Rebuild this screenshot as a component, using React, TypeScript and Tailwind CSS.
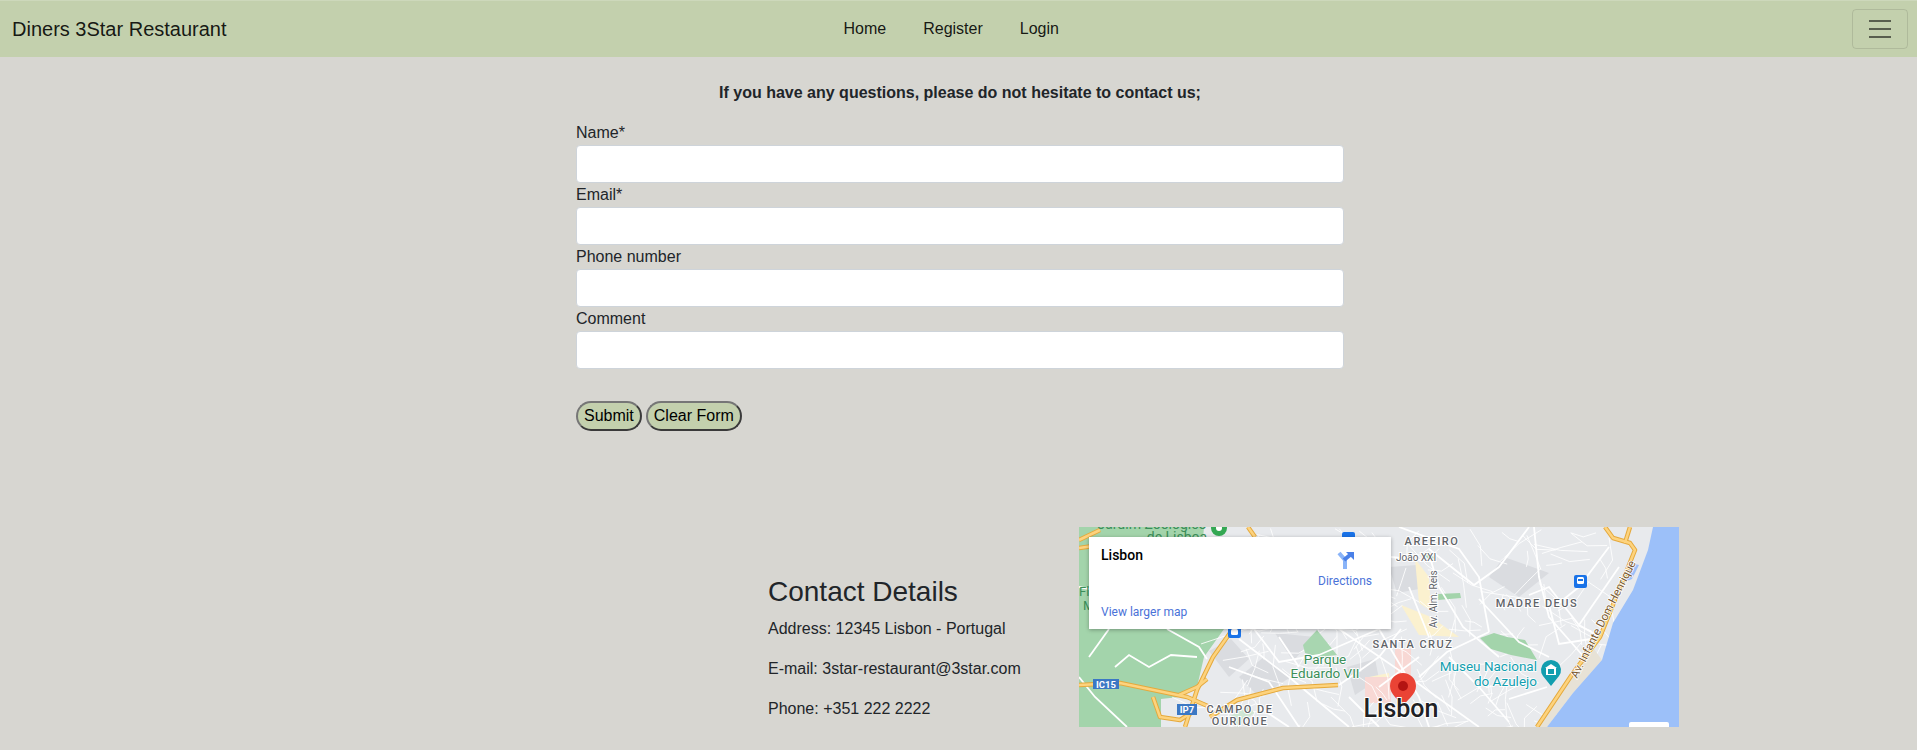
const roads = [
  "M0 158 L41 156 L108 170 L131 180",
  "M151 106 L134 130 L118 163 L106 200",
  "M131 190 L158 173 L204 161 L259 158",
  "M74 170 L81 190 L101 193 L112 186",
  "M0 13 L21 3",
  "M0 21 L14 19",
  "M169 0 L176 10",
  "M458 200 L494 146 L521 110 L548 43 L556 23 L551 16 L534 11 L526 0",
  "M551 0 L546 16",
  "M100 168 L118 160 L128 152",
];

const whiteRoads = [
  "M0 60 L10 62", "M10 130 L30 102", "M0 150 L16 170 L48 200", "M36 140 L50 128 L70 140 L92 128 L118 130",
  "M88 102 L120 120 L128 132", "M160 112 L210 150 L270 200", "M175 102 L200 135 L240 128 L300 102",
  "M260 158 L300 130 L322 102", "M150 140 L190 155 L220 200", "M300 102 L340 170 L350 200",
  "M260 102 L286 120 L330 150 L400 200", "M320 0 L380 22 L400 50 L410 105", "M350 22 L395 58 L420 40 L450 0",
  "M455 0 L460 50 L470 90 L505 130", "M450 68 L470 60 L500 98 L521 110", "M400 72 L440 115 L470 130",
  "M410 105 L368 125 L340 150", "M312 30 L352 34 L360 60 L384 100 L420 130", "M470 78 L480 117 L512 112",
  "M500 98 L540 40", "M200 110 L220 140", "M370 130 L400 160 L430 195", "M430 172 L468 160", "M330 60 L350 110",
  "M530 20 L500 60 L480 76", "M180 180 L210 200", "M270 170 L300 200", "M300 160 L340 130",
];

const grayBlocks = [
  "M130 124 L152 112 L170 132 L150 150 Z", "M185 130 L212 150 L180 170 L160 150 Z", "M196 106 L236 110 L214 134 Z",
  "M310 40 L338 38 L340 62 L318 66 Z", "M425 30 L470 46 L440 70 L410 50 Z", "M268 140 L296 132 L300 152 L276 168 Z",
];

const cream = [
  "M336 32 L350 50 L352 84 L340 76 Z", "M322 78 L352 90 L380 110 L340 108 Z", "M290 150 L310 146 L312 170 L292 170 Z",
];

const pink = ["M316 122 L332 122 L332 150 L316 150 Z", "M286 150 L312 150 L312 176 L286 176 Z"];

// fine street net for the built-up part of the map
function streetNet() {
  const out: string[] = [];
  let seed = 17;
  const next = () => {
    seed = (seed * 1103 + 12345) % 65536;
    return seed / 65536;
  };
  for (let i = 0; i < 210; i++) {
    const x = 135 + next() * 395;
    const y = next() * 200;
    if (x > 470 && y > 120) continue;
    const a = next() * Math.PI;
    const l = 8 + next() * 20;
    const bx = x + Math.cos(a) * l;
    const by = y + Math.sin(a) * l;
    const a2 = a + (next() - 0.5) * 1.6;
    out.push(`M${x.toFixed(1)} ${y.toFixed(1)} L${bx.toFixed(1)} ${by.toFixed(1)} L${(bx + Math.cos(a2) * l).toFixed(1)} ${(by + Math.sin(a2) * l).toFixed(1)}`);
  }
  return out;
}

const streets = streetNet();

function MapDrawing() {
  return (
    <svg viewBox="0 0 600 200" className="block w-[600px] h-[200px]" style={{ fontFamily: "Roboto, sans-serif" }}>
      <rect width="600" height="200" fill="#e8eaed" />
      {/* parks */}
      <path d="M0 0 L125 0 L120 60 L145 102 L125 130 L118 160 L100 170 L82 172 L82 200 L0 200 Z" fill="#a3d4ab" />
      {grayBlocks.map((d) => (
        <path key={d} d={d} fill="#dadce0" />
      ))}
      {cream.map((d) => (
        <path key={d} d={d} fill="#fbf1cf" />
      ))}
      {pink.map((d) => (
        <path key={d} d={d} fill="#f8d8d4" />
      ))}
      {streets.map((d) => (
        <path key={d} d={d} fill="none" stroke="#ffffff" strokeWidth="1" opacity="0.85" />
      ))}
      <path d="M224 118 L238 103 L258 128 L240 130 L226 126 Z" fill="#a8d6b0" />
      <path d="M401 111 L415 106 L428 110 L446 113 L458 133 L432 128 L412 122 Z" fill="#a3d4ab" />
      <path d="M359 67 L381 66 L382 71 L359 73 Z" fill="#a3d4ab" />
      <path d="M344 27 L356 30 L352 34 Z" fill="#a3d4ab" />
      <path d="M150 190 L170 178 L175 186 L158 200 Z" fill="#cfe6d3" />
      {whiteRoads.map((d) => (
        <path key={d} d={d} fill="none" stroke="#ffffff" strokeWidth="1.8" />
      ))}
      {/* river and shore */}
      <path d="M523 133 L494 166 L468 200 L458 200 L494 146 L512 118 Z" fill="#e7e2d6" />
      <path d="M574 0 L569 23 L554 63 L534 96 L523 133 L494 166 L468 200 L600 200 L600 0 Z" fill="#9cc0f9" />
      <path d="M552 36 L560 38 L553 52 L546 55 Z" fill="#9cc0f9" />
      {/* motorways */}
      {roads.map((d) => (
        <path key={d} d={d} fill="none" stroke="#e5a93c" strokeWidth="4.5" strokeLinejoin="round" />
      ))}
      {roads.map((d) => (
        <path key={d + "i"} d={d} fill="none" stroke="#fdd37e" strokeWidth="2.5" strokeLinejoin="round" />
      ))}
      <circle cx="140" cy="1" r="8" fill="#34a853" />
      <circle cx="140" cy="1" r="3" fill="#ffffff" />
      <text x="73" y="2" textAnchor="middle" fontSize="14" fill="#3b8e59">Jardim Zoológico</text>
      <text x="98" y="15" textAnchor="middle" fontSize="14" fill="#3b8e59">de Lisboa</text>
      <rect x="263" y="5" width="13" height="13" rx="2" fill="#1a73e8" />
      <text x="0" y="69" fontSize="13" fill="#3b8e59">Fl</text>
      <text x="4" y="83" fontSize="13" fill="#3b8e59">M</text>

      <rect x="149" y="98" width="13" height="13" rx="2" fill="#1a73e8" />
      <rect x="152" y="102" width="7" height="6" rx="1.5" fill="#ffffff" />
      <rect x="495" y="48" width="13" height="13" rx="2" fill="#1a73e8" />
      <rect x="498" y="50" width="7" height="7" rx="1.5" fill="#ffffff" />
      <rect x="499" y="52" width="5" height="2" fill="#1a73e8" />

      <rect x="14" y="152" width="26" height="10" fill="#3b78c4" />
      <text x="27" y="160.5" textAnchor="middle" fontSize="9.5" fontWeight="700" fill="#ffffff">IC15</text>
      <rect x="98" y="177" width="20" height="11" fill="#3b78c4" />
      <text x="108" y="186" textAnchor="middle" fontSize="9.5" fontWeight="700" fill="#ffffff">IP7</text>

      <g fontSize="11" fontWeight="500" fill="#5f6368" letterSpacing="1.5" textAnchor="middle" stroke="#ffffff" strokeWidth="2" paintOrder="stroke">
        <text x="353" y="18">AREEIRO</text>
        <text x="458" y="80">MADRE DEUS</text>
        <text x="334" y="121">SANTA CRUZ</text>
        <text x="161" y="186">CAMPO DE</text>
        <text x="161" y="198">OURIQUE</text>
      </g>
      <g fontSize="10" fill="#5f6368" stroke="#ffffff" strokeWidth="2" paintOrder="stroke">
        <text x="317" y="34">João XXI</text>
        <text transform="translate(358 101) rotate(-90)">Av. Alm. Reis</text>
      </g>
      <text transform="translate(498 152) rotate(-63)" fontSize="11.5" fill="#7a5a32" stroke="#ffffff" strokeWidth="1.5" paintOrder="stroke">Av. Infante Dom Henrique</text>

      <g fontSize="13.5" fill="#3b8e59" textAnchor="middle" stroke="#ffffff" strokeWidth="1.5" paintOrder="stroke">
        <text x="246" y="137">Parque</text>
        <text x="246" y="151">Eduardo VII</text>
      </g>
      <g fontSize="13.5" fill="#129eaf" textAnchor="end" stroke="#ffffff" strokeWidth="1.5" paintOrder="stroke">
        <text x="458" y="144">Museu Nacional</text>
        <text x="458" y="159">do Azulejo</text>
      </g>
      <path d="M472 159 L464 149 A10 10 0 1 1 480 149 Z" fill="#129eaf" />
      <path d="M467 148 H477 V141 H467 Z M466 141 L472 137 L478 141 Z" fill="#ffffff" />
      <path d="M469 147 V142 H475 V147 Z" fill="#129eaf" />

      <path d="M324 180 C320 172 311 168 311 159 A13 13 0 1 1 337 159 C337 168 328 172 324 180 Z" fill="#ea4335" />
      <circle cx="324" cy="159" r="5" fill="#b31412" />
      <text x="322" y="190" textAnchor="middle" fontSize="25" fontWeight="500" fill="#202124" stroke="#ffffff" strokeWidth="2" paintOrder="stroke">
        Lisbon
      </text>
      <rect x="550" y="195" width="40" height="8" rx="2" fill="#ffffff" />
    </svg>
  );
}

function Field({ label }: { label: string }) {
  return (
    <label className="block">
      <span className="block h-6 leading-6 text-[#212529]">{label}</span>
      <input
        type="text"
        className="block w-full h-[38px] bg-white border border-[#ced4da] rounded-[4px]"
      />
    </label>
  );
}

function PillButton({ children }: { children: React.ReactNode }) {
  return (
    <button
      type="button"
      className="h-[30px] px-[6px] bg-[#c3d0ad] text-black rounded-[15px] border-2 border-t-[#767676] border-l-[#767676] border-r-[#3a3a3a] border-b-[#3a3a3a]"
    >
      {children}
    </button>
  );
}

export default function App() {
  return (
    <div className="min-h-screen bg-[#d7d6d1] text-[#212529] text-base" style={{ fontFamily: '"Liberation Sans", Arial, sans-serif' }}>
      <nav className="h-[57px] bg-[#c3d0ad] border-t border-[#cdd8bb] flex items-center pl-3 pr-[9px]">
        <a className="w-[813px] text-[20px] text-black/90">Diners 3Star Restaurant</a>
        <div className="flex">
          <a className="px-[18.5px] text-black/90">Home</a>
          <a className="px-[18.5px] text-black/90">Register</a>
          <a className="px-[18.5px] text-black/90">Login</a>
        </div>
        <button type="button" className="ml-auto w-[56px] h-[40px] flex items-center justify-center rounded-[4px] border border-black/10">
          <svg width="30" height="30" viewBox="0 0 30 30" fill="none">
            <path d="M4 7h22M4 15h22M4 23h22" stroke="rgba(0,0,0,.55)" strokeWidth="2" strokeMiterlimit="10" />
          </svg>
        </button>
      </nav>

      <main className="w-[768px] ml-[576px] mt-[24px]">
        <p className="font-bold text-center h-6 leading-6">If you have any questions, please do not hesitate to contact us;</p>
        <form className="mt-[16px]">
          <Field label="Name*" />
          <Field label="Email*" />
          <Field label="Phone number" />
          <Field label="Comment" />
          <div className="flex gap-[4px] mt-[32px]">
            <PillButton>Submit</PillButton>
            <PillButton>Clear Form</PillButton>
          </div>
        </form>
      </main>

      <section className="flex ml-[768px] mt-[96px]">
        <div className="w-[311px] pt-[48px]">
          <h3 className="text-[28px] leading-[33.6px] mb-2">Contact Details</h3>
          <p className="mb-4 leading-6">Address: 12345 Lisbon - Portugal</p>
          <p className="mb-4 leading-6">E-mail: 3star-restaurant@3star.com</p>
          <p className="leading-6">Phone: +351 222 2222</p>
        </div>
        <div className="relative w-[600px] h-[200px] overflow-hidden">
          <MapDrawing />
          <div className="absolute left-[10px] top-[10px] w-[302px] h-[92px] bg-white shadow-[0_1px_4px_rgba(0,0,0,0.3)] flex justify-between px-3 pt-[9px] pb-[9px]" style={{ fontFamily: "Roboto, sans-serif" }}>
            <div className="flex flex-col justify-between">
              <div className="text-[14px] leading-[18px] font-medium text-black">Lisbon</div>
              <a className="text-[12px] leading-[16px] text-[#4a72d8]">View larger map</a>
            </div>
            <div className="flex flex-col items-center w-[54px] mr-[7px] pt-[4px]">
              <svg width="20" height="20" viewBox="0 0 20 20">
                <path d="M4 3 L10 10 V19" fill="none" stroke="#8ab4f8" strokeWidth="4" />
                <path d="M9 10 L15 5" fill="none" stroke="#4a80e8" strokeWidth="4" />
                <path d="M11 2 H19 V10 Z" fill="#4a80e8" />
              </svg>
              <a className="text-[12px] leading-[16px] mt-[3px] text-[#4a72d8]">Directions</a>
            </div>
          </div>
        </div>
      </section>
    </div>
  );
}
